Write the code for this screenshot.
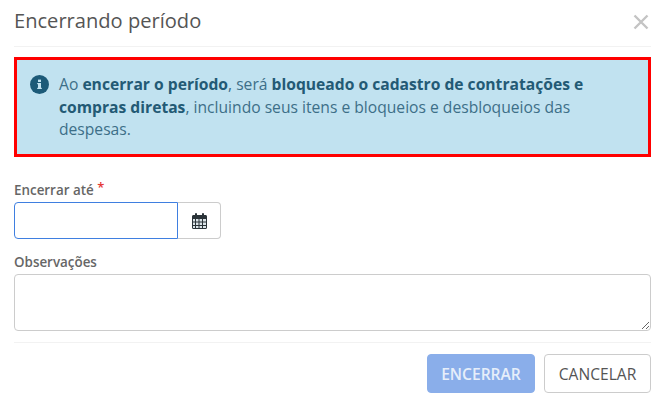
<div class="modal">
  <header class="head">
    <h1>Encerrando período</h1>
    <svg class="close" width="16" height="16" viewBox="0 0 16 16" aria-label="Fechar"><path d="M1.5 1.5 14.5 14.5M14.5 1.5 1.5 14.5" stroke="#c4c4c4" stroke-width="2.4" fill="none"/></svg>
  </header>
  <div class="alert">
    <svg class="info" width="19" height="19" viewBox="0 0 19 19"><circle cx="9.5" cy="9.5" r="9.5" fill="#1c5a78"/><rect x="8" y="8" width="3" height="6" fill="#c1e2f0"/><rect x="7.2" y="8" width="3.4" height="1.2" fill="#c1e2f0"/><rect x="7.2" y="12.8" width="4.6" height="1.2" fill="#c1e2f0"/><rect x="8" y="4.6" width="3" height="2.4" fill="#c1e2f0"/></svg>
    <p>Ao <b>encerrar o período</b>, será <b>bloqueado o cadastro de contratações e compras diretas</b>, incluindo seus itens e bloqueios e desbloqueios das despesas.</p>
  </div>
  <div class="field first">
    <label for="ate">Encerrar até <span class="req">*</span></label>
    <div class="group">
      <input id="ate" type="text" />
      <button class="cal" aria-label="Calendário">
        <svg width="15" height="16" viewBox="0 0 15 16"><path fill="#2a3338" d="M0 3.5C0 2.7.6 2 1.5 2H3V1a1 1 0 0 1 2 0v1h5V1a1 1 0 0 1 2 0v1h1.5C14.4 2 15 2.7 15 3.5V14.5C15 15.3 14.4 16 13.5 16H1.5C.6 16 0 15.3 0 14.5Z"/><path fill="#dbe4e8" d="M1 6h2v2.500H1zM4 6h2.500v2.500H4zM7.500 6H10v2.500H7.500zM11 6h3v2.500h-3zM1 9.500h2V12H1zM4 9.500h2.500V12H4zM7.500 9.500H10V12H7.500zM11 9.500h3V12h-3zM1 13h2v2H1zM4 13h2.500v2H4zM7.500 13H10v2H7.500zM11 13h3v2h-3z"/></svg>
      </button>
    </div>
  </div>
  <div class="field second">
    <label for="obs">Observações</label>
    <textarea id="obs"></textarea>
  </div>
  <footer class="foot">
    <button class="btn primary">ENCERRAR</button>
    <button class="btn">CANCELAR</button>
  </footer>
</div>

<style>
  :global(body) { margin: 0; background: #fff; }
  .modal {
    width: 664px;
    height: 401px;
    box-sizing: border-box;
    padding: 0 13px 0 14px;
    font-family: "Open Sans", sans-serif;
    color: #555;
    overflow: hidden;
  }
  .head {
    height: 47px;
    display: flex;
    justify-content: space-between;
    align-items: center;
    border-bottom: 1px solid #f2f2f2;
    padding-bottom: 5px;
    box-sizing: border-box;
  }
  h1 { margin: 0; font-size: 20.1px; font-weight: 400; line-height: 25px; color: #555; }
  .close { margin-right: 2px; margin-top: 2px; }
  .alert {
    margin-top: 10px;
    height: 100px;
    box-sizing: border-box;
    border: 3px solid #f00;
    background: #c1e2f0;
    display: flex;
    align-items: flex-start;
    padding: 13px 30px 0 13px;
    gap: 10px;
    color: #3d6f88;
  }
  .info { flex: none; margin-top: 2px; }
  .alert p { margin: 0; font-size: 15.65px; line-height: 22.5px; }
  .alert b { font-weight: 700; color: #235a75; }
  .field label { display: block; font-size: 13.4px; font-weight: 600; color: #666; line-height: 17px; }
  .first { margin-top: 25px; }
  .req { color: #e53935; font-size: 13px; position: relative; top: -3px; }
  .group { display: flex; margin-top: 3px; height: 37px; width: 207px; }
  input {
    width: 164px;
    box-sizing: border-box;
    border: 1px solid #3f7fe0;
    border-radius: 4px 0 0 4px;
    outline: none;
    background: #fff;
  }
  .cal {
    width: 43px;
    box-sizing: border-box;
    padding: 0;
    background: #fff;
    border: 1px solid #ccc;
    border-left: 0;
    border-radius: 0 4px 4px 0;
    display: flex;
    align-items: center;
    justify-content: center;
  }
  .second { margin-top: 15px; }
  textarea {
    display: block;
    margin-top: 3px;
    width: 637px;
    height: 57px;
    box-sizing: border-box;
    border: 1px solid #ccc;
    border-radius: 4px;
    background: #fff;
    outline: none;
  }
  .foot {
    margin-top: 11px;
    border-top: 1px solid #f2f2f2;
    padding-top: 11px;
    display: flex;
    justify-content: flex-end;
    gap: 9px;
  }
  .btn {
    height: 39px;
    padding: 0;
    width: 107px;
    box-sizing: border-box;
    border: 1px solid #ccc;
    border-radius: 4px;
    background: #fff;
    color: #555;
    font-family: inherit;
    font-size: 15.6px;
  }
  .primary { width: 108px; background: #8aaeea; border-color: #8aaeea; color: #e6eefa; font-weight: 600; }
</style>
